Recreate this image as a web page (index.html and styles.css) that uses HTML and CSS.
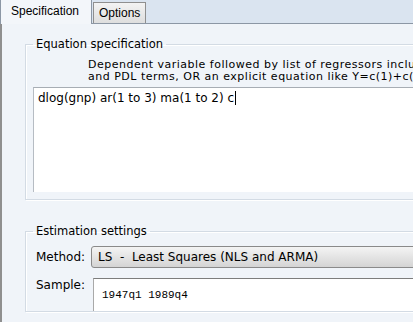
FILE: index.html
```html
<!DOCTYPE html>
<html lang="en">
<head>
    <meta charset="UTF-8">
    <title>Equation Estimation</title>
    <link rel="stylesheet" href="styles.css">
</head>
<body>
<div class="dialog">
    <div class="tabs">
        <div class="tab active">Specification</div>
        <div class="tab">Options</div>
    </div>

    <div class="panel">
        <fieldset class="group eq-group">
            <legend>Equation specification</legend>
            <p class="hint">Dependent variable followed by list of regressors including ARMA<br>and PDL terms, OR an explicit equation like Y=c(1)+c(2)*X.</p>
            <div class="eq-box">dlog(gnp) ar(1 to 3) ma(1 to 2) c<span class="caret"></span></div>
        </fieldset>

        <fieldset class="group est-group">
            <legend>Estimation settings</legend>
            <div class="row">
                <label class="row-label">Method:</label>
                <div class="combo">LS&nbsp; -&nbsp; Least Squares (NLS and ARMA)</div>
            </div>
            <div class="row">
                <label class="row-label">Sample:</label>
                <div class="sample-box">1947q1 1989q4</div>
            </div>
        </fieldset>
    </div>
</div>
</body>
</html>
```

FILE: styles.css
```css
html, body {
    margin: 0;
    width: 413px;
    height: 322px;
    overflow: hidden;
}
body {
    font-family: "DejaVu Sans", Verdana, sans-serif;
    font-size: 12px;
    color: #000;
    background-color: #dae4f0;
}
.dialog {
    width: 640px;
}
.tabs {
    display: flex;
    align-items: flex-end;
    height: 23px;
    font-family: "Liberation Sans", Arial, sans-serif;
}
.tab {
    height: 21px;
    line-height: 20px;
    padding: 0 5px;
    box-sizing: border-box;
    border: 1px solid #8f8f8f;
    border-bottom: none;
    background: linear-gradient(#f3f3f3, #dedede);
    margin-left: 1px;
}
.tab.active {
    width: 92px;
    height: 24px;
    padding-left: 10px;
    margin-left: 0;
    margin-bottom: -1px;
    line-height: 22px;
    border-color: #8c97a5;
    border-top: none;
    background: #f3f6fa;
    position: relative;
    z-index: 1;
}
.panel {
    background-color: #f0f4f9;
    border-top: 1px solid #8c97a5;
    border-left: 2px solid #8f8f8f;
    padding: 13px 0 0 23px;
    height: 300px;
    overflow: hidden;
}
.group {
    margin: 0;
    border: 1px solid #d3dbe4;
    box-shadow: inset 1px 1px 0 #fff, 1px 1px 0 #fff;
    padding: 0 0 7px 7px;
}
.group legend {
    padding: 0 3px;
    margin-left: 0;
    line-height: 14px;
    font-size: 11.5px;
}
.hint {
    margin: 8px 0 0 55px;
    line-height: 12px;
    white-space: nowrap;
    font-size: 11px;
    letter-spacing: 0.5px;
}
.eq-box {
    margin-top: 4px;
    height: 98px;
    background: #fff;
    border-top: 1px solid #a7adb4;
    border-left: 1px solid #b6bcc3;
    padding: 3px 4px;
    line-height: 14px;
}
.caret {
    display: inline-block;
    width: 1px;
    height: 14px;
    background: #000;
    vertical-align: top;
    margin-left: 1px;
}
.est-group {
    margin-top: 24px;
    padding-bottom: 0;
}
.row {
    display: flex;
    align-items: flex-start;
}
.row-label {
    width: 55px;
    padding-left: 3px;
}
.row:first-of-type {
    margin-top: 8px;
    align-items: center;
}
.combo {
    flex: 1;
    height: 22px;
    line-height: 21px;
    box-sizing: border-box;
    padding-left: 6px;
    border: 1px solid #8a8a8a;
    border-radius: 3px;
    background: linear-gradient(#f4f4f4, #e4e4e4 50%, #d4d4d4);
}
.row + .row {
    margin-top: 10px;
}
.sample-box {
    flex: 1;
    height: 33px;
    margin-left: 2px;
    box-sizing: border-box;
    background: #fff;
    border-top: 1px solid #7d7d7d;
    border-left: 1px solid #a9a9a9;
    padding: 9px 8px;
    font-family: "Liberation Mono", "Courier New", monospace;
    font-size: 11px;
    line-height: 14px;
}
```
